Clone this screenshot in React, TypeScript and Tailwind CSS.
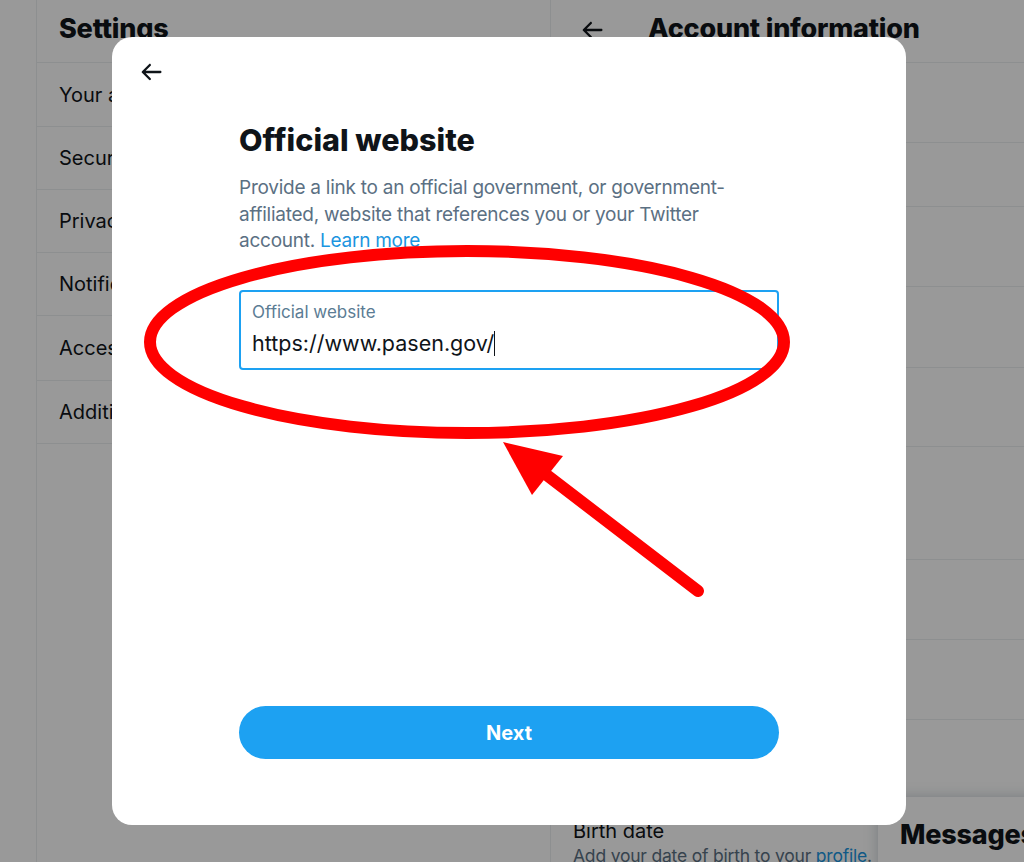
import React from "react";

const BackArrow = ({ className }: { className?: string }) => (
  <svg viewBox="0 0 24 24" className={className} fill="currentColor">
    <path d="M20 11H7.414l4.293-4.293c.39-.39.39-1.023 0-1.414s-1.023-.39-1.414 0l-6 6c-.39.39-.39 1.023 0 1.414l6 6c.195.195.45.293.707.293s.512-.098.707-.293c.39-.39.39-1.023 0-1.414L7.414 13H20c.553 0 1-.447 1-1s-.447-1-1-1z" />
  </svg>
);

const settingsRows: { label: string; h: string }[] = [
  { label: "Your account", h: "h-[64px]" },
  { label: "Security and account access", h: "h-[63px]" },
  { label: "Privacy and safety", h: "h-[63px]" },
  { label: "Notifications", h: "h-[63px]" },
  { label: "Accessibility, display, and languages", h: "h-[65px]" },
  { label: "Additional resources", h: "h-[63px]" },
];

const accountRows: { label: string; h: string }[] = [
  { label: "Username", h: "h-[80px]" },
  { label: "Phone", h: "h-[64px]" },
  { label: "Email", h: "h-[80px]" },
  { label: "Verified", h: "h-[81px]" },
  { label: "Protected Tweets", h: "h-[79px]" },
  { label: "Account creation", h: "h-[113px]" },
  { label: "Country", h: "h-[80px]" },
  { label: "Languages", h: "h-[80px]" },
  { label: "Gender", h: "h-[78px]" },
];

export default function App() {
  return (
    <div
      className="relative w-[1024px] h-[862px] overflow-hidden bg-white text-[#0f1419]"
      style={{ fontFamily: "Inter, 'Noto Sans', sans-serif" }}
    >
      {/* Page behind */}
      <div className="flex h-full">
        <div className="w-[36px] shrink-0" />
        {/* Settings column */}
        <div className="w-[515px] shrink-0 border-l border-r border-[#ebeef0] flex flex-col">
          <div className="h-[63px] shrink-0 border-b border-[#ebeef0] flex items-center px-[22px] pb-[3px]">
            <h1 className="text-[27px] font-extrabold tracking-[-0.2px]">Settings</h1>
          </div>
          {settingsRows.map((r) => (
            <div
              key={r.label}
              className={`${r.h} shrink-0 border-b border-[#ebeef0] flex items-center justify-between px-[22px] text-[20px]`}
            >
              <span>{r.label}</span>
              <span className="text-[#5b7083] text-[22px]">›</span>
            </div>
          ))}
        </div>
        {/* Account information column */}
        <div className="flex-1 flex flex-col min-w-0">
          <div className="h-[63px] shrink-0 border-b border-[#ebeef0] flex items-center pl-[27px] pb-[3px]">
            <BackArrow className="w-[28px] h-[28px] text-[#0f1419]" />
            <h2 className="ml-[42px] text-[27px] font-extrabold tracking-[-0.2px] whitespace-nowrap">
              Account information
            </h2>
          </div>
          {accountRows.map((r) => (
            <div
              key={r.label}
              className={`${r.h} shrink-0 border-b border-[#ebeef0] flex items-center px-[22px] text-[20px]`}
            >
              {r.label}
            </div>
          ))}
          <div className="shrink-0 px-[22px] pt-[20px]">
            <div className="text-[20px] leading-[26px]">Birth date</div>
            <div className="text-[17.5px] leading-[24px] tracking-[-0.2px] text-[#5b7083] whitespace-nowrap">
              Add your date of birth to your <span className="text-[#1b95e0]">profile</span>.
            </div>
          </div>
        </div>
      </div>

      {/* Messages drawer */}
      <div className="absolute left-[878px] top-[797px] w-[420px] h-[120px] bg-white rounded-tl-[18px] shadow-[0_0_14px_rgba(101,119,134,0.35)] px-[22px] pt-[18px]">
        <div className="text-[27px] font-extrabold tracking-[-0.2px]">Messages</div>
      </div>

      {/* Dim overlay */}
      <div className="absolute inset-0 bg-black/40" />

      {/* Modal */}
      <div className="absolute left-[112px] top-[37px] w-[794px] h-[788px] bg-white rounded-[20px] flex flex-col">
        <div className="h-[70px] flex items-center pl-[25px]">
          <BackArrow className="w-[28px] h-[28px] text-[#0f1419]" />
        </div>
        <div className="w-[540px] mx-auto flex flex-col flex-1">
          <h2 className="mt-[15px] text-[30.5px] leading-[36px] font-extrabold">
            Official website
          </h2>
          <p className="mt-[17px] text-[19px] leading-[26.5px] tracking-[-0.25px] text-[#5b7083]">
            Provide a link to an official government, or government-
            <br />
            affiliated, website that references you or your Twitter
            <br />
            account. <span className="text-[#1b95e0]">Learn more</span>
          </p>
          <div className="mt-[35px] h-[80px] border-2 border-[#1da1f2] rounded-[4px] px-[11px] pt-[10px]">
            <div className="text-[17px] leading-[20px] text-[#5b7c94]">Official website</div>
            <div className="mt-[8px] text-[21.5px] leading-[27px] text-[#0f1419] flex items-center">
              <span>https://www.pasen.gov/</span>
              <span className="inline-block w-[1px] h-[25px] bg-[#0f1419]" />
            </div>
          </div>
          <div className="flex-1" />
          <button className="mb-[66px] h-[53px] w-full rounded-full bg-[#1da1f2] text-white text-[20px] font-bold">
            Next
          </button>
        </div>
      </div>

      {/* Red annotation */}
      <svg
        className="absolute inset-0 pointer-events-none"
        width="1024"
        height="862"
        viewBox="0 0 1024 862"
      >
        <ellipse cx="467" cy="342" rx="317" ry="91" fill="none" stroke="#ff0000" strokeWidth="12" />
        <line x1="698" y1="591" x2="548" y2="476" stroke="#ff0000" strokeWidth="12" strokeLinecap="round" />
        <polygon points="503,442 563,456 532,495" fill="#ff0000" />
      </svg>
    </div>
  );
}
